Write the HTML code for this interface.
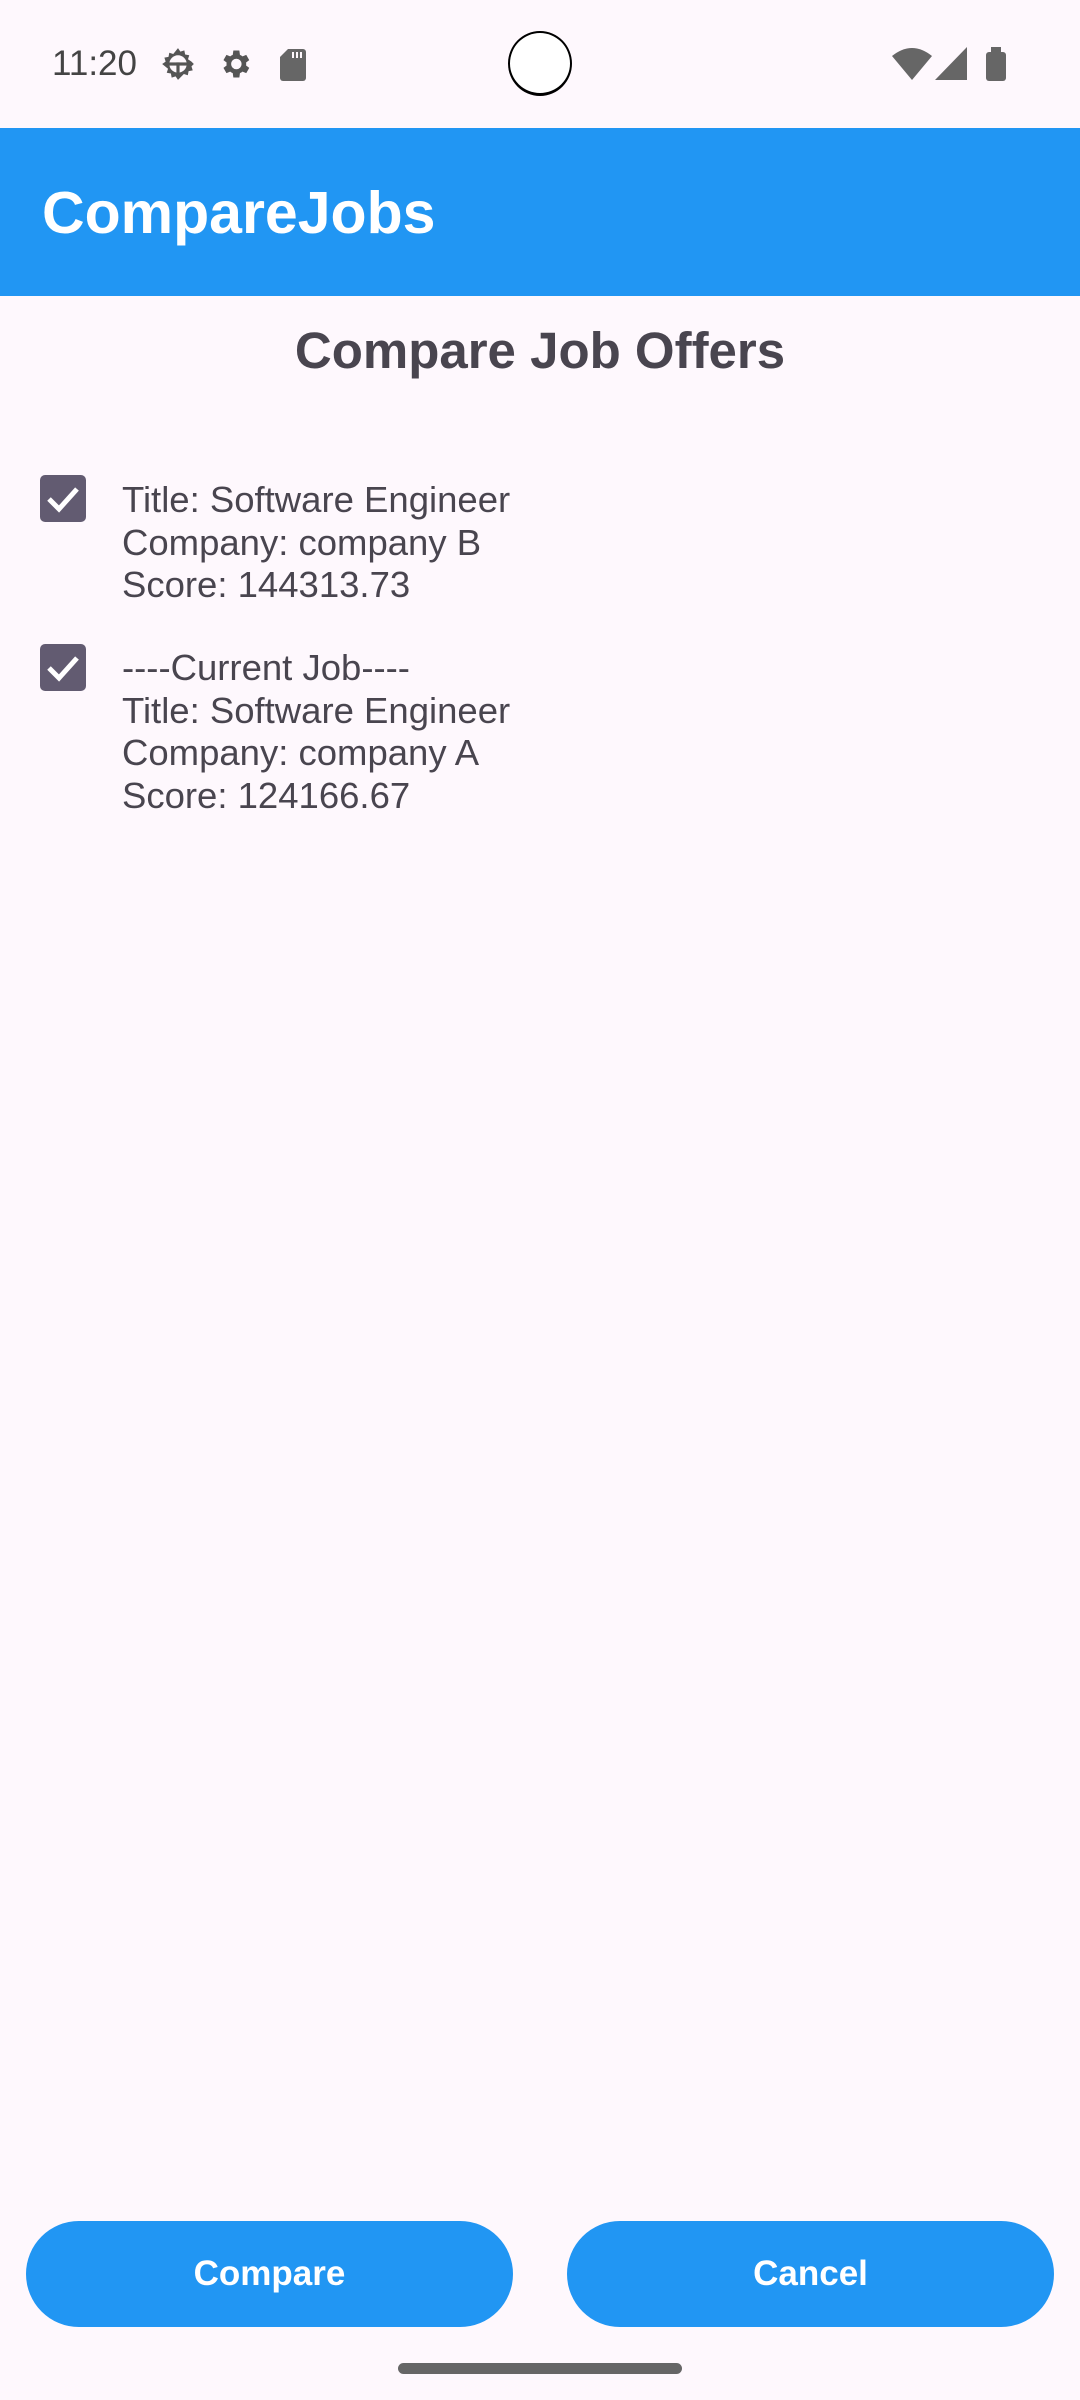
<!DOCTYPE html>
<html><head><meta charset="utf-8"><style>
*{margin:0;padding:0;box-sizing:border-box}
body{width:1080px;height:2400px;background:#fef8fd;font-family:"Liberation Sans",sans-serif;position:relative;overflow:hidden}
.abs{position:absolute}
.bar{left:0;top:128px;width:1080px;height:168px;background:#2196f3}
.t{color:#49454f;font-size:36.5px;line-height:42.5px;left:122px;white-space:nowrap}
.cb{left:40px;width:46px;height:47px;background:#625b71;border-radius:5px}
.btn{top:2221px;height:106px;width:487px;background:#2196f3;border-radius:53px;color:#fff;font-size:35px;font-weight:bold;text-align:center;line-height:106px}
</style></head><body>
<div class="abs" style="left:52px;top:44px;font-size:35px;color:#444;line-height:40px">11:20</div>
<svg class="abs" style="left:158px;top:45px" width="40" height="38" viewBox="0 0 24 24"><path fill="#555" d="M12 2l1.5 2.2 2.5-.8.5 2.6 2.6.5-.8 2.5L20.5 10.5 22 12l-1.5 1.5.8 2.5-2.6.5-.5 2.6-2.5-.8L12 22l-1.5-2.2-2.5.8-.5-2.6-2.6-.5.8-2.5L2 12l2.2-1.5-.8-2.5 2.6-.5.5-2.6 2.5.8z"/><circle cx="12" cy="12" r="5.5" fill="#fef8fd"/><rect x="6" y="11" width="12" height="2" fill="#555"/><rect x="11" y="11" width="2" height="7" fill="#555"/></svg>
<svg class="abs" style="left:217px;top:46px" width="36" height="36" viewBox="0 0 24 24"><path fill="#555" d="M19.4 13a7.5 7.5 0 000-2l2.1-1.6-2-3.5-2.5 1a7 7 0 00-1.7-1L14.9 3h-4l-.4 2.9a7 7 0 00-1.7 1l-2.5-1-2 3.5L6.4 11a7.5 7.5 0 000 2l-2.1 1.6 2 3.5 2.5-1a7 7 0 001.7 1l.4 2.9h4l.4-2.9a7 7 0 001.7-1l2.5 1 2-3.5zM12.9 15.5a3.5 3.5 0 110-7 3.5 3.5 0 010 7z"/></svg>
<svg class="abs" style="left:280px;top:49px" width="26" height="32" viewBox="0 0 26 32"><path fill="#666" d="M8 0h15a3 3 0 013 3v26a3 3 0 01-3 3H3a3 3 0 01-3-3V8z"/><rect x="12" y="3" width="2" height="6" fill="#fef8fd"/><rect x="16" y="3" width="2" height="6" fill="#fef8fd"/><rect x="20" y="3" width="2" height="6" fill="#fef8fd"/></svg>
<div class="abs" style="left:508px;top:31px;width:64px;height:65px;border-radius:50%;border:2px solid #000;border-bottom-width:3px;background:#fff"></div>
<svg class="abs" style="left:892px;top:48px" width="40" height="32" viewBox="0 0 40 32"><path fill="#666" d="M0 8Q20-8 40 8L20 32z"/></svg>
<svg class="abs" style="left:935px;top:47px" width="32" height="33"><path fill="#666" d="M32 0V33H0z"/></svg>
<div class="abs" style="left:986px;top:52px;width:20px;height:29px;background:#666;border-radius:3px"></div>
<div class="abs" style="left:991px;top:47px;width:10px;height:6px;background:#666"></div>
<div class="abs bar"></div>
<div class="abs" style="left:42px;top:173px;color:#fff;font-weight:bold;font-size:59px;line-height:80px">CompareJobs</div>
<div class="abs" style="left:0;width:1080px;top:321px;text-align:center;color:#49454f;font-weight:bold;font-size:51px;line-height:60px">Compare Job Offers</div>
<div class="abs cb" style="top:475px"><svg width="46" height="47" viewBox="0 0 46 47"><path d="M9 24l10 10 18-20" stroke="#fff" stroke-width="5" fill="none"/></svg></div>
<div class="abs t" style="top:479px">Title: Software Engineer<br>Company: company B<br>Score: 144313.73</div>
<div class="abs cb" style="top:644px"><svg width="46" height="47" viewBox="0 0 46 47"><path d="M9 24l10 10 18-20" stroke="#fff" stroke-width="5" fill="none"/></svg></div>
<div class="abs t" style="top:647px">----Current Job----<br>Title: Software Engineer<br>Company: company A<br>Score: 124166.67</div>
<div class="abs btn" style="left:26px">Compare</div>
<div class="abs btn" style="left:567px">Cancel</div>
<div class="abs" style="left:398px;top:2363px;width:284px;height:11px;border-radius:6px;background:#666"></div>
</body></html>
